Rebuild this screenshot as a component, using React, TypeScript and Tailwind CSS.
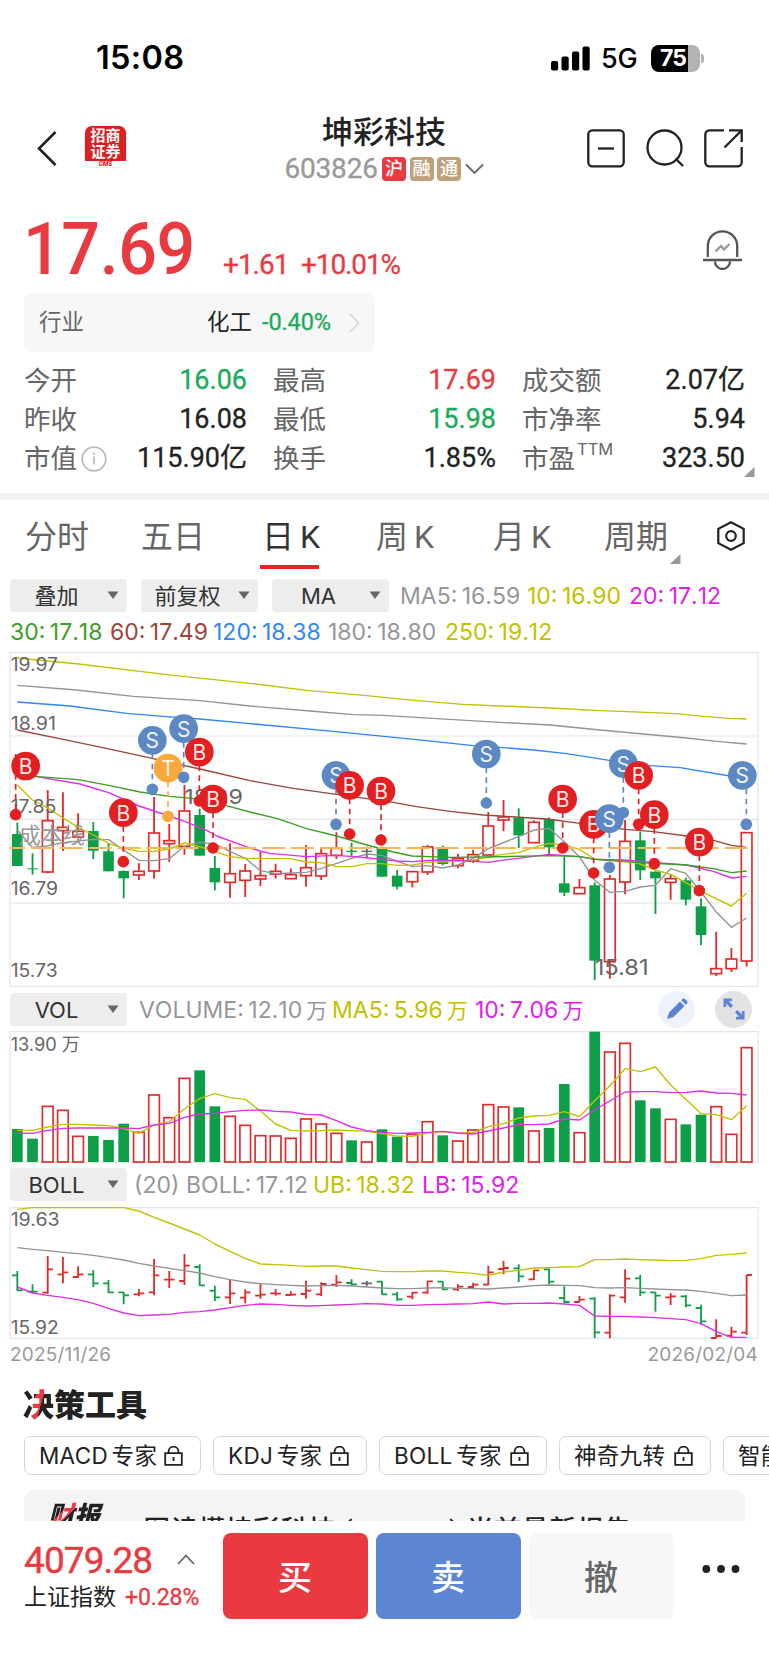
import React from "react";

const CJK = "font-['Roboto','Noto_Sans_CJK_SC',sans-serif]";
const UI = "font-['Inter','Noto_Sans_CJK_SC',sans-serif]";
const LEGEND = "flex whitespace-nowrap pt-[2px] text-[23px] leading-none tracking-[0px] [word-spacing:-2px] [font-kerning:none]";
const SVG_FONT = "Inter, 'Noto Sans CJK SC', sans-serif";

const RED = "#e12b2b";
const GREEN = "#0d9f47";
const GRAY = "#666666";
const COLORS: Record<string, string> = { r: RED, g: GREEN, n: GRAY };

type Bar = [string, number, number, number, number];

// Charts are drawn on a grid of three units per pixel.
const STEP = 45.58;
const xAt = (i: number) => 52 + i * STEP;

// kind, high, body top, body bottom, low
const CANDLES: Bar[] = [
  ["g", 518, 552, 648, 648], ["g", 610, 655, 658, 674], ["r", 420, 511, 665, 670], ["r", 427, 531, 541, 603],
  ["r", 490, 543, 560, 565], ["g", 516, 543, 602, 627], ["g", 580, 604, 664, 664], ["g", 661, 663, 685, 745],
  ["r", 640, 663, 674, 690], ["r", 441, 548, 662, 686], ["r", 522, 571, 580, 636], ["r", 405, 482, 588, 614],
  ["g", 476, 495, 617, 617], ["g", 618, 654, 697, 721], ["r", 580, 670, 696, 743], ["r", 642, 662, 690, 741],
  ["r", 605, 676, 686, 708], ["r", 641, 663, 671, 686], ["r", 655, 673, 685, 685], ["r", 585, 652, 676, 710],
  ["r", 594, 610, 677, 690], ["r", 547, 594, 615, 627], ["g", 578, 602, 606, 618], ["n", 590, 602, 606, 626],
  ["g", 590, 592, 680, 680], ["g", 660, 677, 710, 718], ["r", 664, 664, 694, 712], ["r", 585, 590, 665, 675],
  ["g", 587, 593, 642, 646], ["r", 611, 625, 646, 655], ["r", 599, 613, 632, 639], ["r", 486, 527, 614, 614],
  ["r", 450, 500, 509, 544], ["g", 475, 503, 556, 594], ["r", 511, 516, 577, 577], ["g", 502, 507, 592, 612],
  ["g", 620, 700, 728, 738], ["r", 687, 712, 730, 730], ["g", 697, 706, 932, 990], ["r", 675, 686, 934, 986],
  ["r", 510, 573, 695, 733], ["g", 545, 571, 661, 690], ["g", 664, 665, 685, 792], ["r", 672, 685, 696, 749],
  ["g", 683, 691, 749, 766], ["g", 745, 769, 855, 885], ["r", 845, 955, 970, 978], ["r", 894, 926, 955, 966],
  ["r", 546, 547, 932, 950],
];

const MA_LINES: [string, string][] = [
  ["#c1c100", "52,24 236,42 520,76 750,100 920,121 1100,137 1250,152 1390,163 1500,168 1650,174 1800,182 1940,187 2030,191 2110,199 2190,205 2240,207"],
  ["#939398", "52,106 230,120 400,139 600,152 750,168 930,183 1060,194 1150,196 1310,206 1500,217 1650,225 1800,240 2060,264 2150,274 2240,282"],
  ["#2f86f6", "52,156 210,168 380,190 500,200 600,207 750,221 1000,244 1250,269 1420,287 1500,292 1600,300 1700,311 1790,325 1870,338 1940,346 2040,353 2190,378 2240,380"],
  ["#9c4538", "52,240 190,268 350,302 460,326 600,357 750,392 880,415 1010,433 1180,457 1250,470 1350,484 1450,495 1500,498 1640,507 1740,520 1875,538 1960,545 2060,558 2140,571 2195,586 2240,592"],
  ["#939398", "52,540 97,592 140,588 189,578 280,568 326,569 371,600 417,631 462,632 508,626 554,588 599,577 645,582 690,604 736,625 781,662 827,671 872,669 918,667 963,656 1010,640 1055,625 1101,612 1146,616 1192,634 1237,650 1282,647 1328,654 1374,645 1419,625 1465,596 1500,582 1556,560 1602,540 1647,535 1693,575 1738,620 1784,690 1829,727 1875,724 1921,711 1966,706 2012,656 2057,670 2103,726 2148,785 2194,832 2240,804"],
  ["#c1c100", "52,405 97,450 140,472 189,504 235,532 280,555 326,580 371,595 417,604 462,604 508,597 554,579 599,590 645,605 690,620 736,625 872,626 918,636 963,638 1010,650 1055,650 1101,641 1146,641 1192,646 1237,645 1282,637 1350,635 1410,632 1465,622 1500,614 1556,608 1602,592 1647,580 1693,585 1738,598 1784,627 1875,632 1921,642 1966,660 2012,673 2057,698 2103,724 2194,768 2240,730"],
  ["#df2ee6", "52,372 105,379 240,402 326,428 417,468 508,498 554,514 620,541 650,558 736,589 780,603 810,610 920,620 1010,616 1100,623 1190,633 1237,635 1310,630 1390,632 1465,637 1500,632 1647,613 1740,620 1785,628 1870,630 1960,637 2060,645 2140,664 2195,684 2240,679"],
  ["#3a9f22", "52,375 105,379 235,389 330,407 420,426 508,439 554,443 620,450 690,470 750,486 830,505 920,536 1010,558 1090,582 1180,606 1237,618 1350,622 1450,621 1650,617 1740,620 1785,628 1870,635 1960,640 2060,645 2140,656 2195,668 2240,663"],
];

// letter, badge x, badge y, dot x, dot y
const MARKS: [string, number, number, number, number][] = [
  ["B", 77, 348, 47, 494], ["S", 457, 271, 457, 418], ["T", 504, 354, 504, 499], ["S", 551, 236, 551, 382],
  ["B", 598, 306, 598, 453], ["B", 370, 488, 370, 635], ["B", 639, 447, 639, 594],
  ["S", 1008, 376, 1008, 523], ["B", 1049, 406, 1049, 552], ["B", 1143, 423, 1143, 570], ["S", 1459, 312, 1459, 459],
  ["B", 1688, 447, 1688, 594], ["B", 1781, 523, 1781, 669], ["S", 1870, 341, 1870, 488], ["S", 1828, 506, 1828, 652],
  ["B", 1916, 376, 1916, 523], ["B", 1963, 494, 1963, 641], ["B", 2098, 576, 2098, 722], ["S", 2227, 376, 2239, 523],
];
const MARK_COLORS: Record<string, string> = { B: "#e22022", S: "#5c88c4", T: "#f9a93c" };

const VOLUMES: [string, number][] = [
  ["g", 417], ["g", 446], ["r", 348], ["r", 360], ["r", 438], ["g", 438], ["g", 450], ["g", 401], ["r", 426], ["r", 314],
  ["r", 382], ["r", 264], ["g", 241], ["g", 349], ["r", 378], ["r", 405], ["r", 436], ["r", 437], ["r", 444], ["r", 386],
  ["r", 401], ["r", 429], ["g", 451], ["r", 455], ["g", 418], ["g", 440], ["r", 432], ["r", 394], ["g", 436], ["r", 452],
  ["r", 419], ["r", 343], ["r", 350], ["g", 352], ["r", 422], ["g", 414], ["g", 282], ["r", 427], ["g", 125], ["r", 185],
  ["r", 159], ["g", 331], ["g", 355], ["r", 387], ["g", 403], ["g", 374], ["r", 349], ["r", 432], ["r", 172],
];
const VOL5 = [421, 421, 411, 403, 403, 405, 407, 416, 430, 405, 395, 357, 326, 311, 323, 328, 363, 402, 421, 423, 422, 420, 422, 424, 431, 438, 439, 429, 425, 430, 427, 410, 401, 384, 378, 376, 365, 380, 332, 287, 236, 245, 231, 285, 328, 371, 374, 389, 347];
const VOL10 = [429, 430, 421, 415, 414, 414, 414, 414, 416, 405, 400, 382, 372, 370, 365, 361, 360, 364, 366, 373, 375, 392, 411, 422, 427, 430, 429, 427, 424, 429, 432, 423, 414, 404, 404, 402, 387, 390, 360, 333, 306, 305, 305, 308, 307, 303, 309, 310, 315];

// kind, high, low, open, close
const OHLC: Bar[] = [
  ["g", 228, 287, 241, 286], ["g", 268, 294, 290, 290], ["r", 183, 296, 293, 223], ["r", 186, 265, 238, 232],
  ["r", 214, 248, 246, 238], ["g", 225, 276, 238, 265], ["g", 255, 294, 265, 292], ["g", 291, 328, 292, 301],
  ["r", 282, 304, 298, 295], ["r", 192, 301, 292, 241], ["r", 228, 279, 254, 254], ["r", 177, 270, 258, 212],
  ["g", 208, 272, 216, 271], ["g", 272, 318, 287, 307], ["r", 254, 327, 307, 295], ["r", 283, 325, 308, 292],
  ["r", 267, 311, 302, 299], ["r", 282, 302, 295, 296], ["r", 289, 302, 300, 299], ["r", 257, 311, 297, 287],
  ["r", 262, 303, 298, 267], ["r", 240, 276, 269, 262], ["g", 253, 272, 264, 268], ["n", 258, 273, 265, 265],
  ["g", 259, 299, 260, 298], ["g", 290, 317, 298, 313], ["r", 291, 313, 305, 293], ["r", 258, 296, 293, 259],
  ["g", 259, 285, 260, 283], ["r", 268, 288, 283, 275], ["r", 263, 280, 276, 269], ["r", 212, 271, 269, 232],
  ["r", 197, 238, 222, 219], ["g", 208, 261, 220, 244], ["r", 225, 255, 253, 226], ["g", 221, 268, 223, 260],
  ["g", 274, 325, 309, 321], ["r", 303, 322, 321, 314], ["g", 307, 430, 311, 412], ["r", 298, 430, 413, 302],
  ["r", 223, 323, 307, 251], ["g", 239, 303, 250, 292], ["g", 291, 350, 292, 302], ["r", 294, 330, 307, 304],
  ["g", 300, 337, 304, 331], ["g", 329, 389, 339, 379], ["r", 373, 430, 429, 423], ["r", 395, 427, 422, 410],
  ["r", 240, 420, 413, 240],
];
const UB = [43, 38, 38, 38, 38, 38, 38, 38, 48, 67, 84, 102, 120, 147, 169, 190, 207, 209, 211, 214, 213, 213, 219, 224, 229, 230, 230, 228, 228, 232, 235, 241, 231, 226, 219, 218, 216, 215, 194, 194, 192, 194, 195, 197, 196, 191, 181, 178, 174];
const MB = [158, 163, 167, 172, 176, 181, 188, 195, 205, 213, 220, 227, 234, 245, 254, 261, 266, 269, 271, 273, 272, 271, 273, 276, 279, 281, 281, 279, 278, 280, 281, 282, 279, 276, 272, 270, 271, 272, 278, 279, 278, 280, 282, 284, 285, 289, 295, 302, 300];
const LB = [276, 294, 301, 307, 314, 325, 340, 354, 362, 360, 358, 352, 350, 345, 338, 331, 327, 328, 331, 333, 332, 330, 328, 326, 327, 331, 331, 329, 328, 327, 326, 321, 327, 325, 325, 324, 327, 331, 363, 364, 364, 366, 368, 371, 374, 386, 410, 427, 427];

const pts = (ys: number[]) => ys.map((y, i) => `${xAt(i)},${y}`).join(" ");

function Line({ color, points }: { color: string; points: string }) {
  return <polyline points={points} fill="none" stroke={color} strokeWidth="4.2" strokeLinejoin="round" />;
}

function Label({ x, y, w, size = 54, color = "#666", children }: { x: number; y: number; w: number; size?: number; color?: string; children: string }) {
  return (
    <text x={x} y={y} fontSize={size} fill={color} textLength={w} lengthAdjust="spacingAndGlyphs" fontFamily={SVG_FONT}>
      {children}
    </text>
  );
}

function PriceChart() {
  return (
    <svg className="block h-[340px] w-[769px] shrink-0" viewBox="0 0 2307 1020">
      <g stroke="#e4e4e6" strokeWidth="3.5" fill="none">
        <rect x="30" y="8" width="2244" height="1001" />
        <path d="M30 258H2274M30 508H2274M30 759H2274" />
      </g>
      {CANDLES.map(([k, hi, top, bot, lo], i) => {
        const x = xAt(i);
        const c = COLORS[k];
        return (
          <g key={i}>
            {k === "r" ? (
              <>
                <path d={`M${x} ${hi}V${top}M${x} ${bot}V${lo}`} stroke={c} strokeWidth="5.5" />
                <rect x={x - 16} y={top + 1} width="32" height={Math.max(bot - top, 4)} fill="none" stroke={c} strokeWidth="5" />
              </>
            ) : (
              <>
                <path d={`M${x} ${hi}V${lo}`} stroke={c} strokeWidth="5.5" />
                <rect x={x - 16} y={top} width="32" height={bot - top} fill={c} />
              </>
            )}
          </g>
        );
      })}
      {MA_LINES.map(([c, p], i) => <Line key={i} color={c} points={p} />)}
      <path d="M30 594H2262" stroke="#fbb55a" strokeWidth="5.5" strokeDasharray="69 17.7" strokeDashoffset="24" />
      <Label x={32} y={63} w={142}>19.97</Label>
      <Label x={32} y={241} w={136}>18.91</Label>
      <Label x={32} y={488} w={137}>17.85</Label>
      <Label x={32} y={734} w={142}>16.79</Label>
      <Label x={32} y={980} w={141}>15.73</Label>
      <Label x={56} y={578} w={198} size={66} color="#999">成本线</Label>
      <Label x={553} y={461} w={176} size={62}>18.29</Label>
      <Label x={1784} y={974} w={162} size={64}>15.81</Label>
      {MARKS.map(([t, bx, by, dx, dy], i) => (
        <g key={i}>
          <path d={`M${dx} ${t === "B" && i === 0 ? by - 36 : by + 40}V${dy}`} stroke={MARK_COLORS[t]} strokeWidth="5" strokeDasharray="17 13" />
          <circle cx={dx} cy={dy} r="17.5" fill={MARK_COLORS[t]} />
          <circle cx={bx} cy={by} r="43" fill={MARK_COLORS[t]} />
          <text x={bx} y={by + 24} fontSize="63" textAnchor="middle" fill="#fff" fillOpacity="0.92" fontFamily={SVG_FONT}>{t}</text>
        </g>
      ))}
    </svg>
  );
}

function VolumeChart() {
  return (
    <svg className="block h-[136px] w-[769px] shrink-0" viewBox="0 114 2307 408">
      <rect x="30" y="125" width="2244" height="392" stroke="#e4e4e6" strokeWidth="3.5" fill="none" />
      {VOLUMES.map(([k, y], i) =>
        k === "r" ? (
          <rect key={i} x={xAt(i) - 16} y={y + 1} width="32" height={515 - y} fill="none" stroke={RED} strokeWidth="5" />
        ) : (
          <rect key={i} x={xAt(i) - 16} y={y} width="32" height={516 - y} fill={GREEN} />
        ),
      )}
      <Line color="#c1c100" points={pts(VOL5)} />
      <Line color="#df2ee6" points={pts(VOL10)} />
      <Label x={32} y={182} w={208}>13.90 万</Label>
    </svg>
  );
}

function BollChart() {
  return (
    <svg className="block h-[136px] w-[769px] shrink-0" viewBox="0 30 2307 408">
      <rect x="30" y="38" width="2244" height="392" stroke="#e4e4e6" strokeWidth="3.5" fill="none" />
      {OHLC.map(([k, hi, lo, o, c], i) => {
        const x = xAt(i);
        return <path key={i} d={`M${x} ${hi}V${lo}M${x - 16} ${o}H${x}M${x} ${c}H${x + 16}`} stroke={COLORS[k]} strokeWidth="5.5" fill="none" />;
      })}
      <Line color="#c1c100" points={pts(UB)} />
      <Line color="#939398" points={pts(MB)} />
      <Line color="#df2ee6" points={pts(LB)} />
      <Label x={32} y={93} w={147}>19.63</Label>
      <Label x={32} y={417} w={144}>15.92</Label>
    </svg>
  );
}

function Picker({ label }: { label: string }) {
  return (
    <div className="flex h-[33px] w-[117px] shrink-0 items-center rounded-[4px] bg-[#ededed]">
      <span className="w-[93px] pt-[1px] text-center text-[22px] leading-none text-[#333]">{label}</span>
      <svg width="12" height="9" viewBox="0 0 12 9" className="ml-[4px]"><path d="M0.5 0.5H11.5L6 8Z" fill="#666" /></svg>
    </div>
  );
}

function Stat({ label, value, tone = "text-[#222]", children }: { label: string; value: string; tone?: string; children?: React.ReactNode }) {
  return (
    <div className="flex h-[39px] items-center justify-between">
      <span className="flex items-center text-[26.5px] text-[#666]">{label}{children}</span>
      <span className={`text-[27px] tracking-[0px] [-webkit-text-stroke:0.3px_currentColor] ${tone}`}>{value}</span>
    </div>
  );
}

function Lock() {
  return (
    <svg width="19" height="20" viewBox="0 0 19 20" fill="none" stroke="#222" strokeWidth="1.8">
      <path d="M1.2 7.2H17.8V18.8H1.2ZM4.6 7V5.6A4.9 4.9 0 0 1 14.4 5.6V7M9.5 11V15" />
    </svg>
  );
}

function Chip({ label, width }: { label: string; width: string }) {
  return (
    <div className={`flex h-[39px] shrink-0 items-center justify-between rounded-[7px] border-[1.5px] border-[#d6d6d6] pl-[14px] pr-[17px] text-[22.5px] text-[#222] ${width}`}>
      <span className="whitespace-nowrap pt-[2px] leading-none tracking-[0.3px] [word-spacing:-3px]">{label}</span>
      <Lock />
    </div>
  );
}

const Corner = ({ className }: { className: string }) => (
  <svg className={className} width="11" height="10" viewBox="0 0 11 10"><path d="M10.5 0V10H0Z" fill="#999" /></svg>
);

export default function App() {
  return (
    <div className={`flex h-[1665px] w-[769px] flex-col overflow-hidden bg-white ${CJK}`}>
      {/* Status bar */}
      <div className={`flex h-[114px] shrink-0 items-center justify-between pl-[96px] pr-[65px] pt-[2px] ${UI}`}>
        <span className="text-[32.5px] font-semibold leading-none tracking-[0.3px] text-black">15:08</span>
        <div className="flex items-center">
          <svg width="40" height="25" viewBox="0 0 40 25">
            <rect x="0" y="15" width="7.2" height="9.5" rx="2" />
            <rect x="10.5" y="10.5" width="7.2" height="14" rx="2" />
            <rect x="21" y="5.5" width="7.2" height="19" rx="2" />
            <rect x="31.5" y="0.5" width="7.2" height="24" rx="2" />
          </svg>
          <span className="ml-[10px] w-[50px] text-[27px] font-medium leading-none tracking-[-0.3px] text-black">5G</span>
          <span className="flex h-[27px] w-[49px] items-center rounded-[8px] bg-[linear-gradient(to_right,#000_37px,#b3b3b3_37px)] pl-[9px] text-[23px] font-bold leading-none tracking-[-1px] text-white">75</span>
          <span className="ml-[1px] h-[9px] w-[3px] rounded-r-full bg-[#b3b3b3]" />
        </div>
      </div>

      {/* Title bar */}
      <div className="grid h-[72px] shrink-0 grid-cols-[1fr_auto_1fr] items-start">
        <div className="flex items-start pl-[37px] pt-[11px]">
          <svg className="mt-[6px]" width="20" height="35" viewBox="0 0 20 35" fill="none" stroke="#222" strokeWidth="2.6"><path d="M18.5 1L2 17.5L18.5 34" /></svg>
          <div className="ml-[27px] flex h-[43px] w-[43px] flex-col items-center overflow-hidden rounded-[8px] border border-[#eee] bg-[linear-gradient(to_bottom,#dd1f22_35px,#fff_35px)] pt-[3px]">
            <span className="text-[15px] font-bold leading-[15.5px] text-white">招商</span>
            <span className="text-[15px] font-bold leading-[15.5px] text-white">证券</span>
            <span className="mt-[1px] text-[6.5px] font-black italic leading-[7px] text-[#dd1f22]">CMS</span>
          </div>
        </div>
        <div className="flex flex-col items-center pr-[1px]">
          <span className="text-[31px] font-medium leading-[38px] text-[#222]">坤彩科技</span>
          <div className="mt-[3px] flex items-center gap-[3.5px]">
            <span className="w-[94px] text-[28px] leading-[28px] tracking-[-0.2px] text-[#999] [-webkit-text-stroke:0.3px_currentColor]">603826</span>
            <span className="flex h-[24px] w-[24px] items-center justify-center rounded-[4px] bg-[#e93a41] text-[18px] font-medium leading-none text-white">沪</span>
            <span className="flex h-[24px] w-[24px] items-center justify-center rounded-[4px] bg-[#bfa17a] text-[18px] font-medium leading-none text-white">融</span>
            <span className="flex h-[24px] w-[24px] items-center justify-center rounded-[4px] bg-[#bfa17a] text-[18px] font-medium leading-none text-white">通</span>
            <svg width="19" height="12" viewBox="0 0 19 12" fill="none" stroke="#666" strokeWidth="1.8"><path d="M1 1.5L9.5 10L18 1.5" /></svg>
          </div>
        </div>
        <div className="flex justify-end gap-[20.5px] pr-[26px] pt-[15px]">
          <svg width="38" height="39" viewBox="0 0 38 39" fill="none" stroke="#222" strokeWidth="2.3"><rect x="1.3" y="1.3" width="35.4" height="36" rx="4" /><path d="M11 19.5H27" /></svg>
          <svg width="38" height="39" viewBox="0 0 38 39" fill="none" stroke="#222" strokeWidth="2.3"><circle cx="18.5" cy="18.5" r="17" /><path d="M29.5 29.5L37 37" /></svg>
          <svg width="39" height="39" viewBox="0 0 39 39" fill="none" stroke="#222" strokeWidth="2.3"><path d="M20 1.3H5.3A4 4 0 0 0 1.3 5.3V33.3A4 4 0 0 0 5.3 37.3H33.7A4 4 0 0 0 37.7 33.3V18M25 1.3H37.7V13M37 2L20.5 18.5" /></svg>
        </div>
      </div>

      {/* Price */}
      <div className="flex h-[107px] shrink-0 justify-between pl-[25px] pr-[27px]">
        <div className="flex items-baseline text-[#e93a41]">
          <span className="w-[198px] origin-left -translate-x-[2px] scale-x-[0.935] text-[73px] font-medium leading-[127px] tracking-[-0.5px]">17.69</span>
          <span className="w-[78px] text-[28px] tracking-[-1px] [-webkit-text-stroke:0.3px_currentColor]">+1.61</span>
          <span className="text-[28px] tracking-[-1.1px] [-webkit-text-stroke:0.3px_currentColor]">+10.01%</span>
        </div>
        <svg className="mt-[44px]" width="39" height="40" viewBox="0 0 39 40" fill="none" stroke="#555" strokeWidth="2.3">
          <path d="M4.8 27V16A14.7 14.7 0 0 1 34.2 16V27M0 30H39M12 31.5A7.5 7.5 0 0 0 27 31.5" />
          <path d="M12.5 21.5L18 16L21 19.5L26.5 14" stroke="#999" />
        </svg>
      </div>

      {/* Industry */}
      <div className="ml-[24px] flex h-[59px] w-[351px] shrink-0 items-center rounded-[8px] bg-[#f7f7f7] pl-[15px] pr-[15px]">
        <span className="text-[22.5px] text-[#666]">行业</span>
        <span className="ml-auto text-[22.5px] text-[#222]">化工</span>
        <span className="ml-[10px] w-[70px] text-[23.5px] tracking-[-0.1px] text-[#1aab5a] [-webkit-text-stroke:0.3px_currentColor]">-0.40%</span>
        <svg className="ml-[17px]" width="11" height="20" viewBox="0 0 11 20" fill="none" stroke="#d8d8d8" strokeWidth="1.8"><path d="M1 1L9.5 10L1 19" /></svg>
      </div>

      {/* Stats */}
      <div className="relative grid h-[141px] shrink-0 grid-cols-3 content-start gap-x-[26px] pl-[24px] pr-[24px] pt-[9px]">
        <Stat label="今开" value="16.06" tone="text-[#1aab5a]" />
        <Stat label="最高" value="17.69" tone="text-[#e93a41]" />
        <Stat label="成交额" value="2.07亿" />
        <Stat label="昨收" value="16.08" />
        <Stat label="最低" value="15.98" tone="text-[#1aab5a]" />
        <Stat label="市净率" value="5.94" />
        <Stat label="市值" value="115.90亿">
          <svg className="ml-[4px]" width="26" height="26" viewBox="0 0 26 26" fill="none" stroke="#bbb" strokeWidth="1.8"><circle cx="13" cy="13" r="11.8" /><path d="M13 10.5V18.5M13 6.8V9" /></svg>
        </Stat>
        <Stat label="换手" value="1.85%" />
        <Stat label="市盈" value="323.50"><span className={`mb-[18px] ml-[2px] text-[16.5px] leading-none ${UI}`}>TTM</span></Stat>
        <Corner className="absolute left-[743.5px] top-[115px]" />
      </div>
      <div className="h-[7px] shrink-0 bg-[#f2f2f2]" />

      {/* Period tabs */}
      <div className="relative flex h-[78px] shrink-0 items-start pl-[25px] pt-[17px] text-[32px] leading-[40px] text-[#666] [word-spacing:-2px]">
        <span className="w-[116px]">分时</span>
        <span className="w-[119px]">五日</span>
        <span className="relative w-[116px] text-[#333]">
          <span className="pl-[2px]">日 K</span>
          <span className="absolute left-0 top-[48px] h-[4px] w-[59px] bg-[#f02020]" />
        </span>
        <span className="w-[117px]">周 K</span>
        <span className="w-[111px]">月 K</span>
        <span className="w-[113px]">周期</span>
        <svg className="mt-[4px]" width="28" height="30" viewBox="0 0 28 30" fill="none" stroke="#222" strokeWidth="2.2"><path d="M14 1.3L26.7 7.8V22.2L14 28.7L1.3 22.2V7.8Z" /><circle cx="14" cy="15" r="4.8" /></svg>
        <Corner className="absolute left-[669.5px] top-[54px]" />
      </div>

      {/* Overlays and moving averages */}
      <div className={`h-[72px] shrink-0 ${UI}`}>
        <div className="flex h-[34px] items-center gap-[14px] pl-[10px]">
          <Picker label="叠加" />
          <Picker label="前复权" />
          <Picker label="MA" />
          <div className={`-ml-[3px] ${LEGEND}`}>
            <span className="w-[127px] text-[#96969a]">MA5: 16.59</span>
            <span className="w-[102px] text-[#c1c100]">10: 16.90</span>
            <span className="text-[#df20e6]">20: 17.12</span>
          </div>
        </div>
        <div className={`h-[38px] items-center pl-[10px] ${LEGEND}`}>
          <span className="w-[100px] text-[#3a9f22]">30: 17.18</span>
          <span className="w-[103px] text-[#9c4538]">60: 17.49</span>
          <span className="w-[115px] text-[#2f86f6]">120: 18.38</span>
          <span className="w-[117px] text-[#96969a]">180: 18.80</span>
          <span className="text-[#c1c100]">250: 19.12</span>
        </div>
      </div>
      <PriceChart />

      {/* Volume */}
      <div className={`flex h-[38px] shrink-0 items-center pl-[10px] ${UI}`}>
        <Picker label="VOL" />
        <div className={`ml-[12px] ${LEGEND}`}>
          <span className="w-[193px] text-[#96969a]">VOLUME: 12.10<span className="ml-[4px] text-[21px]">万</span></span>
          <span className="w-[143px] text-[#c1c100]">MA5: 5.96<span className="ml-[4px] text-[21px]">万</span></span>
          <span className="w-[183px] text-[#df20e6]">10: 7.06<span className="ml-[4px] text-[21px]">万</span></span>
        </div>
        <span className="flex h-[37px] w-[37px] items-center justify-center rounded-full bg-[#edf2fb]">
          <svg width="22" height="22" viewBox="0 0 22 22" fill="#5b84d4"><path d="M1 21L3 14.5L14 3.5L18.5 8L7.5 19ZM15.2 2.3L16.5 1A1.8 1.8 0 0 1 19 1L21 3A1.8 1.8 0 0 1 21 5.5L19.7 6.8Z" /></svg>
        </span>
        <span className="ml-[20px] flex h-[37px] w-[37px] items-center justify-center rounded-full bg-[#e3e3e5]">
          <svg width="22" height="22" viewBox="0 0 22 22" fill="#5b84d4"><path d="M0.5 0.5H9V3.2H5.6L10 7.6L7.6 10L3.2 5.6V9H0.5Z M21.5 21.5H13V18.8H16.4L12 14.4L14.4 12L18.8 16.4V13H21.5Z" /></svg>
        </span>
      </div>
      <VolumeChart />

      {/* Bollinger bands */}
      <div className={`flex h-[41px] shrink-0 items-center pl-[10px] ${UI}`}>
        <Picker label="BOLL" />
        <div className={`ml-[7px] text-[#96969a] ${LEGEND}`}>
          <span className="w-[52px]">(20)</span>
          <span className="w-[127px]">BOLL: 17.12</span>
          <span className="w-[109px] text-[#c1c100]">UB: 18.32</span>
          <span className="text-[#df20e6]">LB: 15.92</span>
        </div>
      </div>
      <BollChart />
      <div className={`flex h-[40px] shrink-0 justify-between pl-[10px] pr-[11px] pt-[4px] text-[19px] leading-[20px] tracking-[0.2px] text-[#999] ${UI}`}>
        <span>2025/11/26</span>
        <span>2026/02/04</span>
      </div>

      {/* Decision tools */}
      <div className="flex h-[55px] shrink-0 items-start pl-[23px] pt-[5px] text-[31px] font-black leading-[40px] text-[#222]">
        <span className="bg-[linear-gradient(106deg,#222_36%,#e93a41_36%,#e93a41_55%,#222_55%)] bg-clip-text text-transparent">决</span>
        <span>策工具</span>
      </div>
      <div className={`flex h-[39px] shrink-0 gap-[12px] pl-[24px] ${UI}`}>
        <Chip label="MACD 专家" width="w-[177px]" />
        <Chip label="KDJ 专家" width="w-[154px]" />
        <Chip label="BOLL 专家" width="w-[168px]" />
        <Chip label="神奇九转" width="w-[152px]" />
        <Chip label="智能盯盘" width="w-[152px]" />
      </div>
      <div className="mt-[15px] h-[31px] shrink-0 overflow-hidden px-[24px]">
        <div className="flex h-[80px] items-start rounded-[10px] bg-[#f4f4f4] pl-[24px]">
          <span className="mt-[8px] bg-[linear-gradient(135deg,#222_29%,#e93a41_29%,#e93a41_40%,#222_40%)] bg-clip-text pr-[6px] text-[26px] font-black italic leading-[36px] text-transparent">财报</span>
          <span className="ml-[10px] mt-[21px] whitespace-nowrap text-[26.5px] font-medium leading-[38px] tracking-[0.95px] text-[#222]">一图读懂坤彩科技 (603826) 当前最新报告</span>
        </div>
      </div>

      {/* Bottom bar */}
      <div className="flex h-[144px] shrink-0 items-start bg-white pl-[24px] pt-[12px]">
        <div className="w-[199px]">
          <div className="flex h-[56px] items-center text-[37px] text-[#e93a41]">
            <span className="w-[153px] tracking-[-0.9px] [-webkit-text-stroke:0.4px_currentColor]">4079.28</span>
            <svg className="mb-[3px]" width="18" height="11" viewBox="0 0 18 11" fill="none" stroke="#666" strokeWidth="1.8"><path d="M1 10L9 1.5L17 10" /></svg>
          </div>
          <div className="flex items-center text-[23px] leading-[18px] text-[#222]">
            <span className="w-[101px]">上证指数</span>
            <span className="text-[23px] tracking-[-0.1px] text-[#e93a41] [-webkit-text-stroke:0.3px_currentColor]">+0.28%</span>
          </div>
        </div>
        <div className="flex gap-[8px] text-[34px] font-medium text-white">
          <div className="flex h-[86px] w-[145px] items-center justify-center rounded-[8px] bg-[#e93a3f] pr-[1px] pt-[4px]">买</div>
          <div className="flex h-[86px] w-[145px] items-center justify-center rounded-[8px] bg-[#5c85d3] pr-[1px] pt-[4px]">卖</div>
          <div className="flex h-[86px] w-[145px] items-center justify-center rounded-[8px] bg-[#f7f7f7] pr-[1px] pt-[4px] text-[#666]">撤</div>
        </div>
        <svg className="ml-[28px] mt-[32px]" width="38" height="8" viewBox="0 0 38 8" fill="#222"><circle cx="4.3" cy="4" r="3.9" /><circle cx="19" cy="4" r="3.9" /><circle cx="33.5" cy="4" r="3.9" /></svg>
      </div>
    </div>
  );
}
